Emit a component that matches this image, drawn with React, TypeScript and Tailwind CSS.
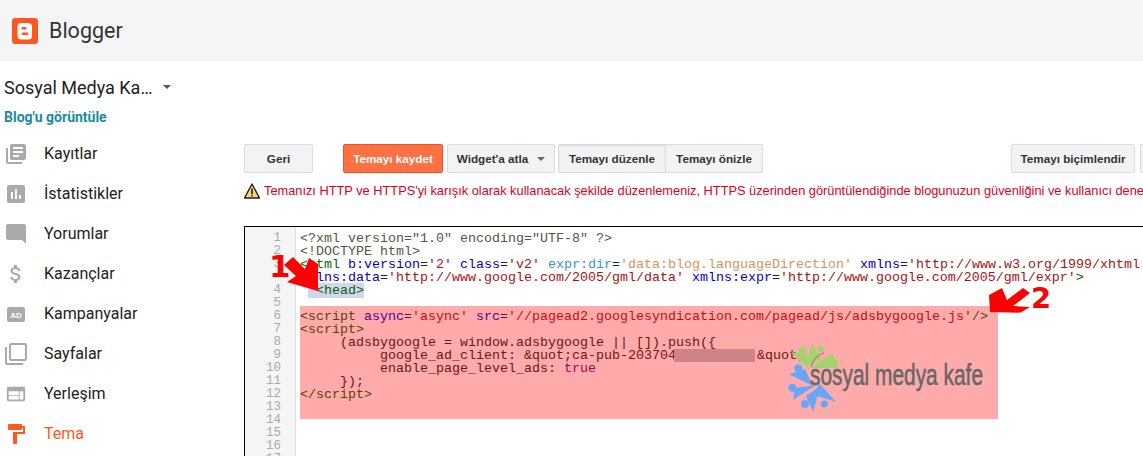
import { FC, ReactNode } from "react";

const sans = "font-['Liberation_Sans',Arial,sans-serif]";
const roboto = "font-['Roboto',sans-serif]";

const tag = "text-[#006600]";
const attr = "text-[#0000cc]";
const str = "text-[#aa1111]";
const meta = "text-[#555544]";
const light = "text-[#3a8ee6]";
const soft = "text-[#d0955a]";
const atom = "text-[#770088]";
const txt = "text-[#222222]";

type Seg = [string, string];

const rows: { n?: number; segs: Seg[]; node?: ReactNode }[] = [
  { n: 1, segs: [[meta, `<?xml version="1.0" encoding="UTF-8" ?>`]] },
  { n: 2, segs: [[meta, "<!DOCTYPE html>"]] },
  {
    n: 3,
    segs: [
      [tag, "<html"],
      [txt, " "],
      [attr, "b:version"],
      [txt, "="],
      [str, "'2'"],
      [txt, " "],
      [attr, "class"],
      [txt, "="],
      [str, "'v2'"],
      [txt, " "],
      [light, "expr:dir"],
      [txt, "="],
      [soft, "'data:blog.languageDirection'"],
      [txt, " "],
      [attr, "xmlns"],
      [txt, "="],
      [str, "'http://www.w3.org/1999/xhtml'"],
    ],
  },
  {
    segs: [
      [attr, "xmlns:data"],
      [txt, "="],
      [str, "'http://www.google.com/2005/gml/data'"],
      [txt, " "],
      [attr, "xmlns:expr"],
      [txt, "="],
      [str, "'http://www.google.com/2005/gml/expr'"],
      [tag, ">"],
    ],
  },
  {
    n: 4,
    segs: [],
    node: (
      <>
        {" "}
        <span className="bg-[#d5d5f2]">
          {" "}
          <span className={tag}>{"<head>"}</span>
        </span>
      </>
    ),
  },
  { n: 5, segs: [] },
  {
    n: 6,
    segs: [
      [tag, "<script"],
      [txt, " "],
      [attr, "async"],
      [txt, "="],
      [str, "'async'"],
      [txt, " "],
      [attr, "src"],
      [txt, "="],
      [str, "'//pagead2.googlesyndication.com/pagead/js/adsbygoogle.js'"],
      [tag, "/>"],
    ],
  },
  { n: 7, segs: [[tag, "<script>"]] },
  { n: 8, segs: [[txt, "     (adsbygoogle = window.adsbygoogle || []).push({"]] },
  {
    n: 9,
    segs: [],
    node: (
      <span className={txt}>
        {"          google_ad_client: &quot;ca-pub-203704"}
        <span className="-ml-[2px] inline-block h-[13px] w-[81px] bg-[#b8c4c8] align-top" />
        <span className="ml-[2px]">&amp;quot;</span>
      </span>
    ),
  },
  {
    n: 10,
    segs: [
      [txt, "          enable_page_level_ads: "],
      [atom, "true"],
    ],
  },
  { n: 11, segs: [[txt, "     });"]] },
  { n: 12, segs: [[tag, "</script>"]] },
  { n: 13, segs: [] },
  { n: 14, segs: [] },
  { n: 15, segs: [] },
  { n: 16, segs: [] },
  { n: 17, segs: [] },
];

const Icon: FC<{ d: string; className?: string }> = ({ d, className }) => (
  <svg viewBox="0 0 24 24" className={className ?? "h-6 w-6 fill-[#aaaaaa]"}>
    <path d={d} />
  </svg>
);

const navItems: { label: string; icon: ReactNode }[] = [
  {
    label: "Kayıtlar",
    icon: (
      <Icon d="M4 6H2v14c0 1.1.9 2 2 2h14v-2H4V6zm16-4H8c-1.1 0-2 .9-2 2v12c0 1.1.9 2 2 2h12c1.1 0 2-.9 2-2V4c0-1.1-.9-2-2-2zm-1 9H9V9h10v2zm-4 4H9v-2h6v2zm4-8H9V5h10v2z" />
    ),
  },
  {
    label: "İstatistikler",
    icon: (
      <Icon d="M19 3H5c-1.1 0-2 .9-2 2v14c0 1.1.9 2 2 2h14c1.1 0 2-.9 2-2V5c0-1.1-.9-2-2-2zM9 17H7v-7h2v7zm4 0h-2V7h2v10zm4 0h-2v-4h2v4z" />
    ),
  },
  {
    label: "Yorumlar",
    icon: <Icon d="M21.99 4c0-1.1-.89-2-1.99-2H4c-1.1 0-2 .9-2 2v12c0 1.1.9 2 2 2h14l4 4-.01-18z" />,
  },
  {
    label: "Kazançlar",
    icon: (
      <Icon d="M11.8 10.9c-2.27-.59-3-1.2-3-2.15 0-1.09 1.01-1.85 2.7-1.85 1.78 0 2.44.85 2.5 2.1h2.21c-.07-1.72-1.12-3.3-3.21-3.81V3h-3v2.16c-1.94.42-3.5 1.68-3.5 3.61 0 2.31 1.91 3.46 4.7 4.13 2.5.6 3 1.48 3 2.41 0 .69-.49 1.79-2.7 1.79-2.06 0-2.87-.92-2.98-2.1h-2.2c.12 2.19 1.76 3.42 3.68 3.83V21h3v-2.15c1.95-.37 3.5-1.5 3.5-3.55 0-2.84-2.43-3.81-4.7-4.4z" />
    ),
  },
  {
    label: "Kampanyalar",
    icon: (
      <svg viewBox="0 0 24 24" className="h-6 w-6">
        <rect x="3" y="5" width="18" height="15" rx="2" fill="#aaaaaa" />
        <text
          x="12"
          y="15.5"
          textAnchor="middle"
          fontSize="8"
          fontWeight="700"
          fill="#ffffff"
          fontFamily="Liberation Sans, sans-serif"
        >
          AD
        </text>
      </svg>
    ),
  },
  {
    label: "Sayfalar",
    icon: (
      <Icon d="M3 5H1v16c0 1.1.9 2 2 2h16v-2H3V5zm18-4H7c-1.1 0-2 .9-2 2v14c0 1.1.9 2 2 2h14c1.1 0 2-.9 2-2V3c0-1.1-.9-2-2-2zm0 16H7V3h14v14z" />
    ),
  },
  {
    label: "Yerleşim",
    icon: (
      <Icon
        className="h-[22px] w-[22px] fill-[#aaaaaa]"
        d="M20 4H4c-1.1 0-1.99.9-1.99 2L2 18c0 1.1.9 2 2 2h16c1.1 0 2-.9 2-2V6c0-1.1-.9-2-2-2zm-5 14H4v-4h11v4zm0-5H4V9h11v4zm5 5h-4V9h4v9z"
      />
    ),
  },
  {
    label: "Tema",
    icon: (
      <Icon
        className="h-6 w-6 fill-[#ff5722]"
        d="M18 4V3c0-.55-.45-1-1-1H5c-.55 0-1 .45-1 1v4c0 .55.45 1 1 1h12c.55 0 1-.45 1-1V6h1v4H9v11c0 .55.45 1 1 1h2c.55 0 1-.45 1-1v-9h8V4h-3z"
      />
    ),
  },
];

const btn =
  "flex h-[29px] shrink-0 items-center justify-center rounded-[2px] border border-[#dcdcdc] bg-[#f3f3f3] text-[11.7px] font-bold text-[#333333]";

const Logo: FC = () => (
  <svg viewBox="0 0 200 85" className="absolute left-[540px] top-[113px] h-[85px] w-[200px]">
    <g fill="#a6d16f">
      <circle cx="17.3" cy="10.7" r="4" />
      <circle cx="35.7" cy="9.3" r="3.5" />
      <circle cx="49" cy="22.7" r="4" />
      <polygon points="6,12 24,30 22,14" />
      <polygon points="27,3 20,27 36,19" />
      <polygon points="48,13 25,28 52,28" />
    </g>
    <path d="M26 27 Q30 15 39 13" fill="none" stroke="#666666" strokeWidth="0.8" />
    <g fill="#6aa5fa">
      <circle cx="13.3" cy="28.3" r="4" />
      <circle cx="7.3" cy="47.7" r="4" />
      <circle cx="20" cy="64" r="4" />
      <circle cx="39.3" cy="64" r="3.5" />
      <polygon points="4,34.3 28,46 20,29" />
      <polygon points="10,48 31,45 8,60" />
      <polygon points="28.3,72 21,56 35,46" />
      <polygon points="51,62 34,43 29,55" />
    </g>
    <text
      x="25"
      y="44.5"
      fontSize="29"
      fill="#666666"
      stroke="#666666"
      strokeWidth="0.5"
      fontFamily="Liberation Sans, sans-serif"
      textLength="173"
      lengthAdjust="spacingAndGlyphs"
    >
      sosyal medya kafe
    </text>
  </svg>
);

const App: FC = () => {
  return (
    <div className={`relative h-[456px] w-[1143px] overflow-hidden bg-white ${roboto}`}>
      <header className="flex h-[61px] items-center bg-[#f5f5f5] pl-3">
        <svg viewBox="0 0 26 26" className="h-[26px] w-[26px]">
          <rect width="26" height="26" rx="3" fill="#ff5722" />
          <rect x="5.5" y="5" width="14.5" height="16.5" rx="4" fill="#ffffff" />
          <rect x="9.5" y="9" width="5" height="2.5" rx="1.2" fill="#ff5722" />
          <rect x="9.5" y="14.5" width="7" height="2.5" rx="1.2" fill="#ff5722" />
        </svg>
        <span className="ml-[11px] mt-[2px] text-[21.5px] text-[#333333]">Blogger</span>
      </header>

      <div className="flex">
        <aside className="w-[244px] shrink-0">
          <div className="flex h-[46px] items-center pl-1 pt-[6px]">
            <span className="text-[18px] text-[#222222]">Sosyal Medya Ka…</span>
            <span className="ml-[11px] h-0 w-0 border-x-[4px] border-t-[4px] border-x-transparent border-t-[#555555]" />
          </div>
          <div className="flex h-[20px] items-center pl-1 text-[14px] font-bold text-[#1a8b9d]">Blog'u görüntüle</div>
          <nav className="mt-[7px]">
            {navItems.map((item) => (
              <div key={item.label} className="flex h-10 items-center">
                <span className="ml-1 flex w-6 justify-center">{item.icon}</span>
                <span className={`ml-4 text-[16px] ${item.label === "Tema" ? "text-[#ff5722]" : "text-[#222222]"}`}>
                  {item.label}
                </span>
              </div>
            ))}
          </nav>
        </aside>

        <main className={`min-w-0 flex-1 overflow-hidden pt-[83px] ${sans}`}>
          <div className="flex w-[960px]">
            <button className={`${btn} w-[69px]`}>Geri</button>
            <button className="ml-[30px] flex h-[29px] w-[100px] items-center justify-center rounded-[2px] border border-[#f4511e] bg-[#ff7043] text-[11.7px] font-bold text-white">
              Temayı kaydet
            </button>
            <button className={`${btn} ml-[4px] w-[108px] gap-[9px]`}>
              Widget'a atla
              <span className="h-0 w-0 border-x-[4px] border-t-[4px] border-x-transparent border-t-[#666666]" />
            </button>
            <button className={`${btn} ml-[3px] w-[108px] rounded-r-none bg-[#e6e6e6] shadow-[inset_0_1px_2px_rgba(0,0,0,0.1)]`}>
              Temayı düzenle
            </button>
            <button className={`${btn} w-[97px] rounded-l-none border-l-0`}>Temayı önizle</button>
            <button className={`${btn} ml-auto w-[124px]`}>Temayı biçimlendir</button>
            <button className={`${btn} ml-[5px] w-[64px]`} />
          </div>

          <div className="mt-[9px] flex h-[18px] items-center whitespace-nowrap">
            <svg viewBox="0 0 16 16" className="h-4 w-4 shrink-0">
              <polygon points="8,1 15.5,15 0.5,15" fill="#f7d774" stroke="#222222" strokeWidth="1.4" strokeLinejoin="round" />
              <rect x="7.2" y="5.5" width="1.6" height="5.5" fill="#222222" />
              <rect x="7.2" y="11.8" width="1.6" height="1.6" fill="#222222" />
            </svg>
            <span className="ml-1 text-[12.8px] text-[#dd0022]">
              Temanızı HTTP ve HTTPS'yi karışık olarak kullanacak şekilde düzenlemeniz, HTTPS üzerinden görüntülendiğinde blogunuzun güvenliğini ve kullanıcı deneyimini
            </span>
          </div>

          <div className="relative mt-[26px] h-[240px] w-[1000px] overflow-hidden border-l border-t border-black pt-[5px] font-['Liberation_Mono','Courier_New',monospace] text-[13.33px] leading-[13px]">
            {rows.map((row, i) => (
              <div key={i} className="flex h-[13px]">
                <div className="h-[13px] w-[51px] shrink-0 whitespace-pre border-r border-[#dddddd] bg-[#f5f5f5] pr-[14px] text-right text-[12.5px] text-[#aaaaaa]">
                  {row.n ?? ""}
                </div>
                <div className="whitespace-pre pl-[4px]">
                  {row.node ??
                    row.segs.map(([c, t], j) => (
                      <span key={j} className={c}>
                        {t}
                      </span>
                    ))}
                </div>
              </div>
            ))}
            <div className="absolute left-0 top-0 h-[5px] w-[51px] border-r border-[#dddddd] bg-[#f5f5f5]" />
            <div className="absolute left-[55px] top-[79px] h-[113px] w-[698px] bg-[#ff0000]/[0.33]" />
            <Logo />
          </div>
        </main>
      </div>

      {/* kirmizi oklar ve numaralar ekran goruntusunun ustune cizilmis */}
      <svg viewBox="0 0 1143 456" className="pointer-events-none absolute left-0 top-0 h-[456px] w-[1143px]">
        <polygon points="293,257 305,269 309,258 318,264 318,291 287,282 296,276 284,265" fill="#ff0000" />
        <polygon points="1002,288 989,295 990,312 1020,312.7 1030,307 1013,306 1030,293 1023,288 1007,300" fill="#ff0000" />
      </svg>
      <span className="absolute left-[269px] top-[248px] font-['DejaVu_Sans',sans-serif] text-[31px] font-bold leading-[36px] text-[#ff0000]">
        1
      </span>
      <span className="absolute left-[1031px] top-[281px] font-['DejaVu_Sans',sans-serif] text-[29px] font-bold leading-[35px] text-[#ff0000]">
        2
      </span>
    </div>
  );
};

export default App;
